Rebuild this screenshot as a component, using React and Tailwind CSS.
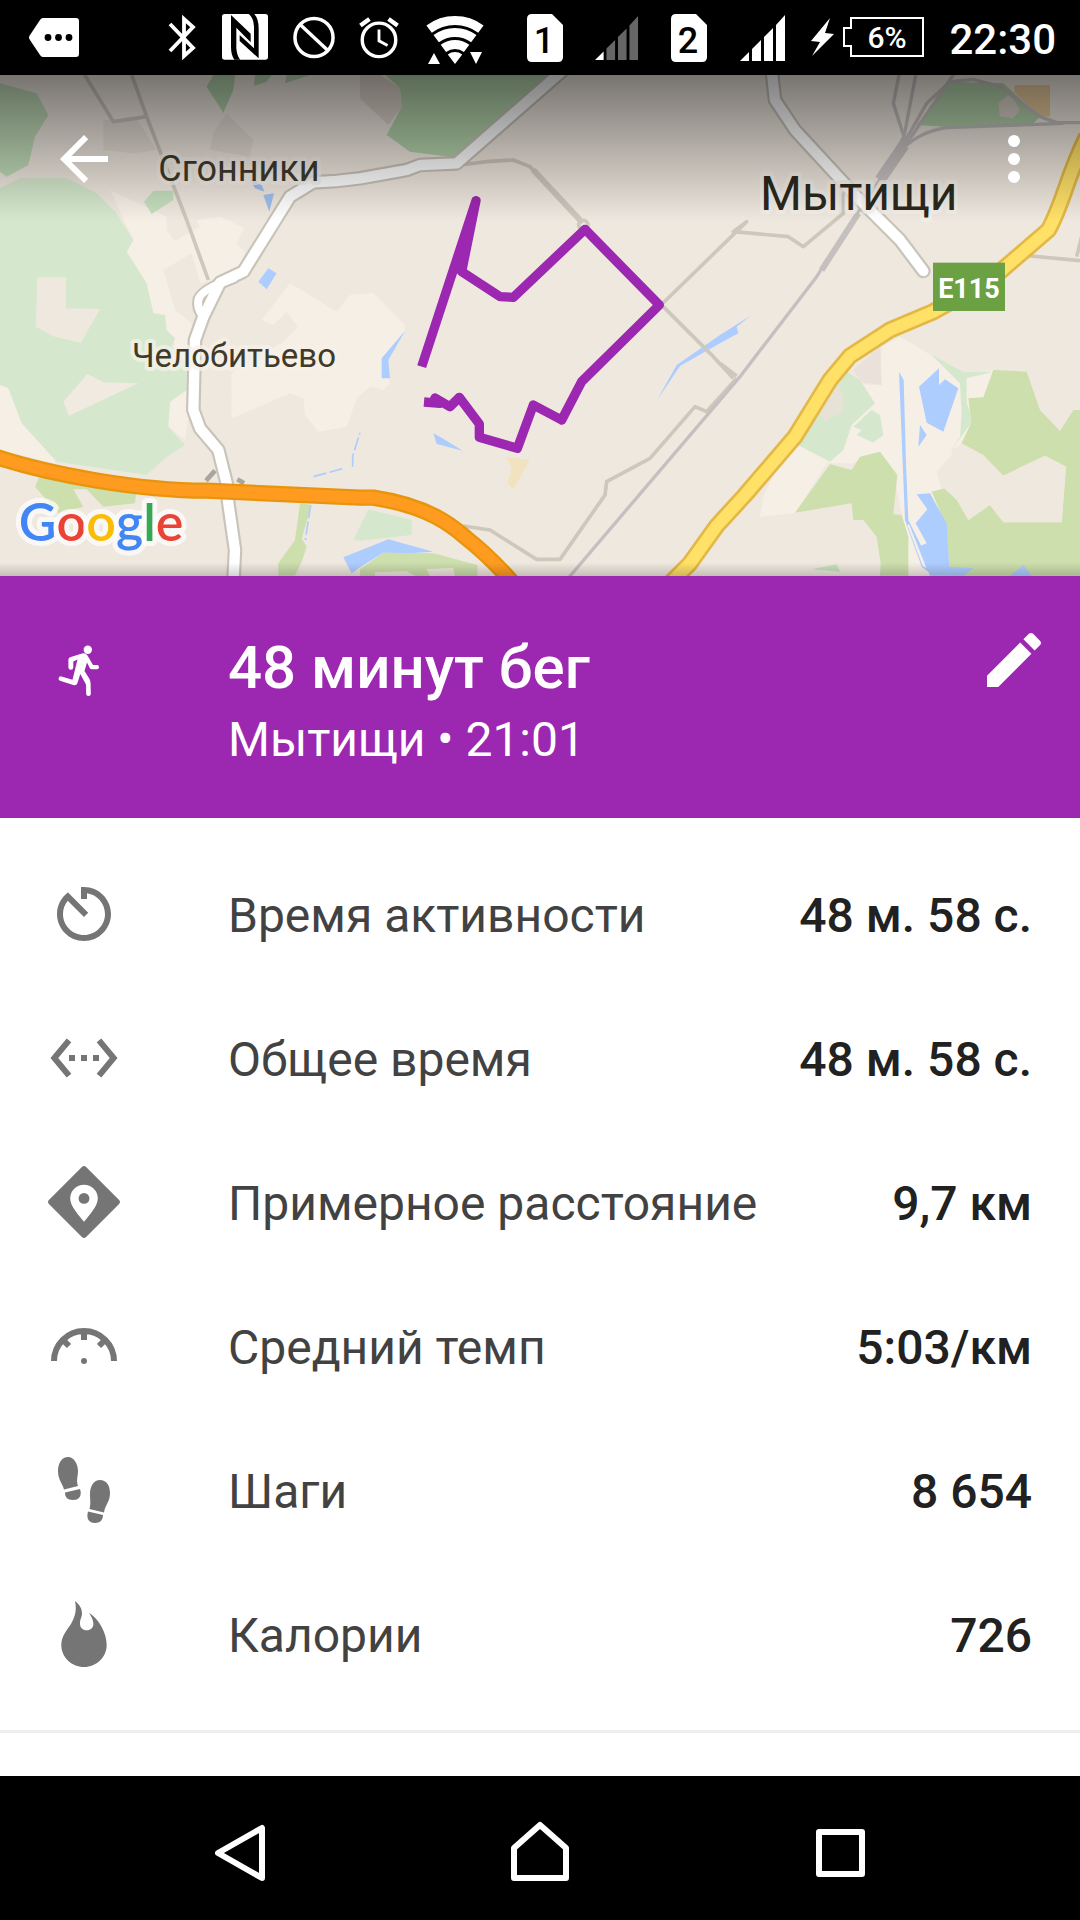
const MAP_AREAS = [
  // light built-up blocks
  { fill: "#f6efe6", points: "330,360 500,440 500,480 525,512 600,470 590,450 660,440 735,475 708,520 735,545 720,600 600,640 575,550 490,600 525,720 575,760 575,900 555,960 520,810 460,730 380,545 400,510" },
  { fill: "#f6efe6", points: "785,750 870,640 1010,725 1050,675 1120,668 1215,765 1215,790 1150,870 1170,940 1150,960 1110,950 1070,985 1040,1070 955,1085 915,1035 910,985 870,970 695,1045 695,910 850,815 893,770 860,725 820,765" },
  { fill: "#f6efe6", points: "0,945 25,950 70,1060 165,1160 165,1180 0,1140" },
  { fill: "#f6efe6", points: "505,1000 560,960 565,1040 555,1110 505,1070" },
  // forests on the left
  { fill: "#d5e8cd", points: "0,355 60,325 200,325 290,370 350,430 400,510 380,545 440,640 460,730 495,735 500,780 525,805 515,830 560,880 560,960 510,995 505,1070 555,1125 500,1160 440,1215 170,1175 65,1060 25,955 0,945" },
  { fill: "#efe8df", points: "112,622 198,622 198,715 300,717 243,818 165,800 107,770" },
  { fill: "#f1eae1", points: "262,912 310,937 415,940 207,1037 190,995" },
  { fill: "#c0dbb8", points: "0,40 110,70 145,135 105,200 85,285 20,320 0,305" },
  { fill: "#c6dfbe", points: "432,395 460,362 520,362 520,390 455,432" },
  { fill: "#b4d3ab", points: "640,15 705,15 700,60 670,128 620,50" },
  { fill: "#b4d3ab", points: "765,15 815,15 800,35 762,47" },
  { fill: "#b4d3ab", points: "860,15 930,15 855,40" },
  { fill: "#e6ded5", points: "310,150 410,145 470,240 400,250 310,240" },
  { fill: "#e6ded5", points: "640,190 680,130 760,210 750,260 630,240" },
  { fill: "#cddfad", points: "120,1215 410,1255 405,1300 310,1310 260,1258 220,1258 250,1310 175,1330 105,1250" },
  { fill: "#cddfad", points: "900,1300 935,1305 905,1405 920,1430 905,1475 885,1517 835,1517 835,1480 885,1410" },
  { fill: "#d5e8cd", points: "1060,1410 1105,1318 1235,1350 1235,1395 1080,1412" },
  { fill: "#aecdff", points: "1030,1462 1165,1408 1300,1445 1230,1450 1150,1448 1080,1492 1055,1510" },
  { fill: "#cddfad", points: "1080,1498 1150,1448 1300,1450 1432,1485 1432,1520 1080,1520" },
  { fill: "#efe8df", points: "1125,1507 1220,1504 1250,1520 1125,1520" },
  { fill: "#efe8df", points: "1280,1497 1360,1494 1365,1520 1290,1520" },
  { fill: "#aecdff", points: "775,635 805,595 830,610 800,658" },
  { fill: "#9fc0ee", points: "745,320 785,345 793,365 765,355" },
  { fill: "#9fc0ee", points: "790,375 822,370 808,425" },
  // middle
  { fill: "#b4d3ab", points: "1140,0 1680,0 1380,265 1230,245 1160,195 1205,110 1200,55" },
  { fill: "#dfd5cc", points: "1080,85 1165,165 1205,110 1200,55 1140,15 1080,15" },
  { fill: "#aecdff", points: "1217,780 1165,870 1170,925 1145,925 1145,865" },
  { fill: "#aecdff", points: "1300,1090 1325,1103 1388,1142 1310,1122" },
  { fill: "#f1e3c0", points: "1518,1160 1590,1170 1540,1258 1522,1240 1535,1195" },
  { fill: "#aecdff", points: "1970,992 2030,885 2160,795 2255,735 2210,770 2215,790 2160,820 2040,888" },
  // upper right
  { fill: "#b4d3ab", points: "2750,165 2850,35 3010,40 3120,140 3100,160 2860,172" },
  { fill: "#dfd5cc", points: "2995,100 3030,70 3060,120 3040,145 3000,140" },
  { fill: "#e8cb9c", points: "3045,45 3150,45 3150,140 3115,138 3042,65" },
  // lower right
  { fill: "#f6efe6", points: "2520,940 2640,945 2645,830 2700,800 2800,860 2900,910 2980,900 2950,985 2905,985 2915,1060 2880,1125 2850,1160 2810,1205 2825,1260 2840,1517 2725,1517 2705,1330 2680,1200 2640,1145 2560,1180 2480,1180 2385,1330 2280,1340 2290,1280 2370,1110" },
  { fill: "#eae2da", points: "2560,900 2640,830 2645,945 2585,935" },
  { fill: "#d5e8cd", points: "2540,905 2580,930 2625,1000 2555,1065 2530,1140 2490,1175 2375,1115" },
  { fill: "#e6e3d6", points: "2515,945 2530,980 2530,1025 2475,1055 2450,1015" },
  { fill: "#d5e8cd", points: "2560,1070 2615,1020 2640,1035 2650,1095 2620,1118 2570,1095 2585,1080" },
  { fill: "#d5e8cd", points: "2795,855 2890,905 2980,905 2900,925 2900,1000 2920,1050 2840,1160 2880,1100 2885,1030 2880,940" },
  { fill: "#cddfad", points: "2980,900 3080,905 3120,1020 3180,1083 3220,1020 3240,1020 3240,1517 2850,1517 2840,1370 2795,1265 2835,1255 2870,1290 2905,1350 2970,1305 3010,1357 3185,1357 3198,1190 3135,1157 3010,1217 2950,1155 2885,1120 2915,1055 2905,985 2950,982" },
  { fill: "#efe8df", points: "2810,1205 2860,1185 2855,1140 2885,1125 2950,1160 3010,1217 3135,1157 3198,1190 3185,1357 3010,1357 2970,1305 2905,1350 2875,1292 2835,1258" },
  { fill: "#cddfad", points: "2385,1328 2490,1183 2555,1200 2580,1160 2640,1145 2692,1215 2680,1333 2705,1335 2725,1400 2725,1517 2640,1517 2642,1480 2630,1400 2590,1350 2560,1350 2555,1300" },
  { fill: "#aecdff", points: "2697,905 2711,930 2718,1180 2725,1350 2800,1500 2790,1510 2765,1490 2715,1350" },
  { fill: "#f6efe6", points: "2727,1362 2780,1495 2768,1488 2722,1365" },
  { fill: "#aecdff", points: "2757,950 2817,895 2817,945 2835,928 2875,955 2830,1085 2780,1058" },
  { fill: "#aecdff", points: "2760,1065 2780,1095 2755,1130" },
  { fill: "#aecdff", points: "2750,1273 2790,1270 2840,1360 2848,1490 2920,1495 2890,1517 2790,1517 2755,1430 2780,1420 2747,1360 2782,1318" },
  { fill: "#aecdff", points: "3030,1517 3070,1485 3095,1517" },
  { fill: "#c7e0be", points: "2435,1498 2510,1483 2520,1505" },
];

const STREAMS = ["M940 1220L1030 1195", "M1058 1190V1158L1080 1088", "M932 1305L916 1410"];

const SMALL_ROADS = [
  "M245 0L340 155L440 140",
  "M390 0L440 140L560 450L625 630",
  "M1380 285L1460 275L1540 270L1590 290L1748 458",
  "M1980 708L2240 455L2200 485L2365 500L2410 530L2530 430V370",
  "M1980 700L2140 860L2200 925",
  "M2160 880L2210 918",
  "M1390 1368L1470 1380L1610 1468H1680L1815 1275L1820 1235L1950 1165L2085 1010L2120 1025L2210 925",
  "M3060 555L3240 572",
  "M3230 560L3245 500",
];

const RAILS = [
  "M1700 1530L2220 920L2450 620L2575 425L2700 240",
  "M2700 0L2680 100L2712 200",
  "M2750 0L2712 200L2640 330",
  "M2870 0L2700 250",
  "M2700 240L2780 100L2850 35L2920 28L3000 50L3120 140L3170 158H3240",
  "M2710 235Q2760 185 2840 173L3190 160",
];

const MAIN_ROADS = [
  "M1690 0L1370 280L1260 285L1220 300L1080 325L1010 333L940 337L870 380L730 605L660 638L610 740L585 810L580 1020L600 1075L655 1140L680 1240L685 1300L705 1440L700 1540",
  "M2315 0L2325 90L2385 180L2560 370L2700 510L2770 603",
];

const ORANGE_ROAD = "M-20 1158C150 1215 420 1262 620 1262L1080 1283H1120C1300 1310 1370 1380 1400 1405Q1470 1460 1540 1540";
const YELLOW_ROAD = "M2010 1540L2070 1480L2150 1368L2235 1275L2385 1100L2490 930L2550 858L2670 780L2800 725L2900 670L3000 605L3145 480C3190 400 3200 320 3260 200";
const ROUTE = "M1265 890L1428 392L1385 605L1500 680L1540 682L1755 478L1978 705L1745 935L1685 1050L1600 1005L1552 1135L1438 1102L1438 1062L1378 982L1350 1010L1305 984L1320 1000L1272 996";

function RouteMap() {
  return (
    <svg viewBox="0 15 3240 1503" preserveAspectRatio="xMidYMid slice" className="block h-[501px] w-full" role="img" aria-label="Мытищи">
      <defs>
        <linearGradient id="topShade" x1="0" y1="0" x2="0" y2="1">
          <stop offset="0" stopColor="#000" stopOpacity="0.5" />
          <stop offset="0.5" stopColor="#000" stopOpacity="0.25" />
          <stop offset="1" stopColor="#000" stopOpacity="0" />
        </linearGradient>
        <linearGradient id="bottomShade" x1="0" y1="0" x2="0" y2="1">
          <stop offset="0" stopColor="#000" stopOpacity="0" />
          <stop offset="1" stopColor="#000" stopOpacity="0.18" />
        </linearGradient>
      </defs>
      <rect y="0" width="3240" height="1530" fill="#efe8df" />
      {MAP_AREAS.map((a, i) => <polygon key={i} points={a.points} fill={a.fill} />)}
      <g fill="none" strokeLinejoin="round">
        <g stroke="#aecdff" strokeWidth="5" strokeDasharray="40 10">
          {STREAMS.map((d) => <path key={d} d={d} />)}
        </g>
        <g stroke="#cdc7bc" strokeWidth="11">
          {SMALL_ROADS.map((d) => <path key={d} d={d} />)}
          <path d="M1600 300L1740 450" strokeWidth="18" />
          <circle cx="1750" cy="465" r="14" />
        </g>
        <g stroke="#c5c0c0" strokeWidth="10">
          {RAILS.map((d) => <path key={d} d={d} />)}
          <path d="M2640 330L2712 225" strokeWidth="34" />
          <path d="M2465 600L2575 430" strokeWidth="18" />
        </g>
        <path d="M618 1232L645 1202M712 1228L732 1240" stroke="#aaa59f" strokeWidth="14" />
        <g stroke="#c9c4ba" strokeWidth="44" strokeLinecap="round">
          {MAIN_ROADS.map((d) => <path key={d} d={d} />)}
          <path d="M700 625Q600 660 595 690Q590 715 610 740" strokeWidth="36" />
        </g>
        <g stroke="#fff" strokeWidth="31" strokeLinecap="round">
          {MAIN_ROADS.map((d) => <path key={d} d={d} />)}
          <path d="M700 625Q600 660 595 690Q590 715 610 740" strokeWidth="24" />
        </g>
        <path d={YELLOW_ROAD} stroke="#e3b846" strokeWidth="52" />
        <path d={YELLOW_ROAD} stroke="#ffe168" strokeWidth="36" />
        <path d={ORANGE_ROAD} stroke="#e8940c" strokeWidth="49" />
        <path d={ORANGE_ROAD} stroke="#ff9c20" strokeWidth="35" />
      </g>
      <rect x="2799" y="578" width="216" height="145" fill="#6ba043" />
      <text x="2907" y="684" textAnchor="middle" fontSize="81" fontWeight="700" fill="#fff">E115</text>
      <g fill="#3f3a2a" stroke="#f6f1ea" strokeOpacity="0.75" strokeWidth="24" strokeLinejoin="round" style={{ paintOrder: "stroke" }}>
        <text x="475" y="334" fontSize="108">Сгонники</text>
        <text x="396" y="890" fontSize="99">Челобитьево</text>
        <text x="2280" y="419" fontSize="144" fill="#2b281d">Мытищи</text>
      </g>
      <path d={ROUTE} fill="none" stroke="#9c27b0" strokeWidth="28" strokeLinejoin="round" />
      <text x="56" y="1412" fontFamily="Lato, sans-serif" fontSize="156" fontWeight="600" stroke="#fff" strokeOpacity="0.7" strokeWidth="30" strokeLinejoin="round" style={{ paintOrder: "stroke" }}>
        <tspan fill="#4285f4">G</tspan>
        <tspan fill="#ea4335">o</tspan>
        <tspan fill="#fbbc05">o</tspan>
        <tspan fill="#4285f4">g</tspan>
        <tspan fill="#34a853">l</tspan>
        <tspan fill="#ea4335">e</tspan>
      </text>
      <rect y="15" width="3240" height="440" fill="url(#topShade)" />
      <rect y="1478" width="3240" height="40" fill="url(#bottomShade)" />
    </svg>
  );
}

function SimIcon({ label }) {
  return (
    <svg viewBox="0 0 36 48" className="h-12 w-9">
      <path d="M5 0H25L36 11V43Q36 48 31 48H5Q0 48 0 43V5Q0 0 5 0Z" fill="#fff" />
      <text x="17" y="39" textAnchor="middle" fontSize="36" fontWeight="500" fill="#000">{label}</text>
    </svg>
  );
}

function SignalBars({ className, dim }) {
  const rest = dim ? "#666" : "#fff";
  return (
    <svg viewBox="0 0 46 48" className={className}>
      <path d="M0 47L9 38V47Z" fill="#fff" />
      <path d="M12 35L21 26V47H12ZM24 23L33 14V47H24ZM36 11L45 1V47H36Z" fill={rest} />
    </svg>
  );
}

function StatusBar() {
  return (
    <header className="flex h-[75px] items-center bg-black pr-6 pl-7 text-white">
      <svg viewBox="28 0 52 75" className="mr-auto h-[75px] w-[52px]">
        <path d="M43 18H76Q79 18 79 21V54Q79 57 76 57H43Q41 57 40 55L30 40Q28 37.500 30 35L40 20Q41 18 43 18Z" fill="#fff" />
        <g fill="#000"><circle cx="48" cy="37.500" r="3.400" /><circle cx="58.500" cy="37.500" r="3.400" /><circle cx="69" cy="37.500" r="3.400" /></g>
      </svg>
      <div className="flex items-center gap-6">
        <svg viewBox="170 0 30 75" className="h-[75px] w-[30px]" fill="none" stroke="#fff" strokeWidth="3.800">
          <path d="M173 24L196 48L187 56V19L196 27L173 51" />
        </svg>
        <svg viewBox="192 -15 144 225" className="h-[75px] w-12">
          <rect x="195" y="27" width="138" height="137" rx="8" fill="#fff" />
          <path d="M222 30L281 86V112L238 68V130Q240 155 250 164H232Q222 150 222 125Z" />
          <path d="M305 160L248 108V90L291 130V65Q290 38 275 27H292Q305 42 305 70Z" />
        </svg>
        <svg viewBox="295 0 43 75" className="h-[75px] w-[42px]" fill="none" stroke="#fff" strokeWidth="3.600">
          <circle cx="316.500" cy="37.500" r="19.500" /><path d="M302 24L331 51" />
        </svg>
        <svg viewBox="360 0 42 75" className="h-[75px] w-10" fill="none" stroke="#fff" strokeWidth="3.600">
          <circle cx="381" cy="40" r="17.600" />
          <path d="M381 29V41L390 46" strokeWidth="3" />
          <path d="M361.500 25L371 18M400.500 25L391 18" strokeWidth="4.500" />
        </svg>
        <svg viewBox="426 0 64 75" className="h-[75px] w-16">
          <g fill="none" stroke="#fff" strokeWidth="9">
            <path d="M432.100 29.100A43.500 43.500 0 0 1 483.900 29.100" />
            <path d="M439.200 38.700A31.500 31.500 0 0 1 476.800 38.700" />
            <path d="M446.400 48.300A19.500 19.500 0 0 1 469.600 48.300" />
          </g>
          <path d="M450.800 54.400A12 12 0 0 1 465.200 54.400L458 64ZM431 64L437 53L443 64ZM473 52H485L479 64Z" fill="#fff" />
        </svg>
        <div className="ml-4 flex"><SimIcon label="1" /></div>
        <div className="px-2"><SignalBars dim className="h-12 w-11" /></div>
        <SimIcon label="2" />
        <div className="pl-2"><SignalBars className="h-12 w-12" /></div>
        <div className="flex items-center gap-2">
          <svg viewBox="814 0 24 75" className="h-[75px] w-6"><path d="M833 18L814 41L823 42L815 56L837 34L828 33Z" fill="#fff" /></svg>
          <svg viewBox="845 0 82 75" className="h-[75px] w-[82px]">
            <path d="M853 18H925V56H853V46H846V28H853Z" fill="none" stroke="#fff" strokeWidth="2" />
            <text x="889" y="48" textAnchor="middle" fontSize="30" fontWeight="500" fill="#fff">6%</text>
          </svg>
        </div>
        <time className="pt-1 text-[42px] leading-[75px] font-medium">22:30</time>
      </div>
    </header>
  );
}

const STATS = [
  {
    label: "Время активности",
    value: "48 м. 58 с.",
    icon: <path d="M11 3v4h2V5.080c3.390.490 6 3.390 6 6.920 0 3.870-3.130 7-7 7s-7-3.130-7-7c0-1.680.590-3.220 1.580-4.420L12 13l1.410-1.410-6.800-6.800v.020C4.420 6.450 3 9.050 3 12c0 4.970 4.020 9 9 9 4.970 0 9-4.030 9-9s-4.030-9-9-9h-1z" />,
  },
  {
    label: "Общее время",
    value: "48 м. 58 с.",
    icon: <path d="M7.770 6.760L6.230 5.480.820 12l5.410 6.520 1.540-1.280L3.420 12l4.350-5.240zM7 13h2v-2H7v2zm10-2h-2v2h2v-2zm-6 2h2v-2h-2v2zm6.770-7.520l-1.540 1.280L20.580 12l-4.350 5.240 1.540 1.280L23.180 12l-5.410-6.520z" />,
  },
  {
    label: "Примерное расстояние",
    value: "9,7 км",
    icon: (
      <>
        <path d="M11.300.300Q12-.300 12.700.300L23.700 11.300Q24.300 12 23.700 12.700L12.700 23.700Q12 24.300 11.300 23.700L.300 12.700Q-.300 12 .300 11.300Z" />
        <path d="M12 18.600C9.500 15.600 7.400 13.100 7.400 10.850a4.600 4.600 0 0 1 9.200 0C16.600 13.100 14.500 15.600 12 18.600Z" fill="#fff" />
        <circle cx="12" cy="10.800" r="1.800" />
      </>
    ),
  },
  {
    label: "Средний темп",
    value: "5:03/км",
    icon: (
      <>
        <path d="M2 17a10 10 0 0 1 20 0M12 7v3M4.900 9.900l2.100 2.100M19.100 9.900l-2.100 2.100" fill="none" stroke="currentColor" strokeWidth="2" />
        <circle cx="12" cy="17" r="1" />
      </>
    ),
  },
  {
    label: "Шаги",
    value: "8 654",
    icon: (
      <g transform="scale(0.33333)">
        <path d="M20 3C26 3 30 10 30 17C30 23 28 26 30 32L16 35.500C14.500 29 10 26 10 17C10 9 14 3 20 3Z" />
        <path d="M17 38.500L32 35C34 41 32 46 25 46C19 46 17 43 17 38.500Z" />
        <path d="M52 26C58 26 62 31 62 39C62 48 57 51 56 58.500L41.500 55C43 49 42 46 42 40C42 32 46 26 52 26Z" />
        <path d="M40 57.500L55 61C55 66 52 69 47 69C41 69 38 65 40 57.500Z" />
      </g>
    ),
  },
  {
    label: "Калории",
    value: "726",
    icon: (
      <g transform="scale(0.33333)">
        <path d="M27 3C32 7 34 11 34 15.500C34 19 32 21 32 25.500C32 30 35 32.300 38.500 32.300C43 32.300 46 29 45.300 25C45 21 43 18 41 14.700C51 21 58.700 35 58.700 47C58.700 59 48.500 69 36 69C23.500 69 13.300 59 13.300 47C13.300 38 19 32 23 26C27 19 29 12 27 3Z" />
      </g>
    ),
  },
];

function StatRow({ icon, label, value }) {
  return (
    <div className="flex h-36 items-center px-12 text-5xl">
      <svg viewBox="0 0 24 24" fill="currentColor" className="size-[72px] shrink-0 text-[#757575]">{icon}</svg>
      <dt className="ml-[108px] flex-1 pt-1 text-[#424242]">{label}</dt>
      <dd className="pt-1 font-medium text-[#212121]">{value}</dd>
    </div>
  );
}

export default function App() {
  return (
    <div className="flex min-h-screen flex-col bg-white font-[Roboto,sans-serif]">
      <StatusBar />

      <section className="relative">
        <RouteMap />
        <div className="absolute inset-x-0 top-0 flex h-[168px] items-center justify-between pr-[30px] pl-12 text-white">
          <button type="button" aria-label="Назад">
            <svg viewBox="0 0 24 24" fill="currentColor" className="size-[72px]"><path d="M20 11H7.830l5.590-5.590L12 4l-8 8 8 8 1.410-1.410L7.830 13H20v-2z" /></svg>
          </button>
          <button type="button" aria-label="Ещё">
            <svg viewBox="0 0 24 24" fill="currentColor" className="size-[72px]"><circle cx="12" cy="6" r="2" /><circle cx="12" cy="12" r="2" /><circle cx="12" cy="18" r="2" /></svg>
          </button>
        </div>
      </section>

      <section className="flex items-start bg-[#9c27b0] pt-14 pr-[30px] pb-[42px] pl-12 text-white">
        <svg viewBox="48 632 72 72" fill="currentColor" className="size-[72px] shrink-0">
          <circle cx="87.800" cy="649.800" r="4.200" />
          <path d="M82 653.500Q85.500 652.500 87.500 655.500L93 665H97Q99 665 99 667.200Q99 669.300 97 669.300H91.500Q90.500 669.300 90 668.500L87 662.500L84.500 671L89.500 679Q90.500 681 90.600 683.500L90.800 694Q90.800 696 88.500 696Q86.200 696 86.200 694L86 684.500L80.300 674L77.500 683Q76.500 685.600 74 685.200L60 680.800Q58 680 58.700 678Q59.300 675.800 61.500 676.400L72.500 679.800L77.500 659.500L73.300 661.500V667.500Q73.300 669.800 70.800 669.800Q68.400 669.800 68.400 667.500V659.500Q68.400 658 70 657.300Z" />
        </svg>
        <div className="ml-[108px] flex-1">
          <h1 className="text-6xl leading-[72px] font-medium">48 минут бег</h1>
          <p className="text-5xl leading-[72px]">Мытищи • 21:01</p>
        </div>
        <button type="button" aria-label="Изменить" className="-mt-2">
          <svg viewBox="0 0 24 24" fill="currentColor" className="size-[72px]"><path d="M3 17.250V21h3.750L17.810 9.940l-3.750-3.750L3 17.250zM20.710 7.040c.390-.390.390-1.020 0-1.410l-2.340-2.340c-.390-.390-1.020-.390-1.410 0l-1.830 1.830 3.750 3.750 1.830-1.830z" /></svg>
        </button>
      </section>

      <main className="flex-1">
        <dl className="border-b-3 border-[#eee] py-6">
          {STATS.map((s) => <StatRow key={s.label} {...s} />)}
        </dl>
      </main>

      <nav className="flex h-36 items-center bg-black px-[90px] text-white">
        <button type="button" aria-label="Назад" className="flex flex-1 justify-center">
          <svg viewBox="204 1812 72 72" className="size-[72px]" fill="none" stroke="currentColor" strokeWidth="6" strokeLinejoin="round"><path d="M262 1828V1878L218 1853Z" /></svg>
        </button>
        <button type="button" aria-label="Домой" className="flex flex-1 justify-center">
          <svg viewBox="504 1812 72 72" className="size-[72px]" fill="none" stroke="currentColor" strokeWidth="6" strokeLinejoin="round"><path d="M514 1878V1848L540 1825L566 1848V1878Z" /></svg>
        </button>
        <button type="button" aria-label="Недавние" className="flex flex-1 justify-center">
          <svg viewBox="804 1812 72 72" className="size-[72px]" fill="none" stroke="currentColor" strokeWidth="6" strokeLinejoin="round"><path d="M819 1832H862V1874H819Z" /></svg>
        </button>
      </nav>
    </div>
  );
}
